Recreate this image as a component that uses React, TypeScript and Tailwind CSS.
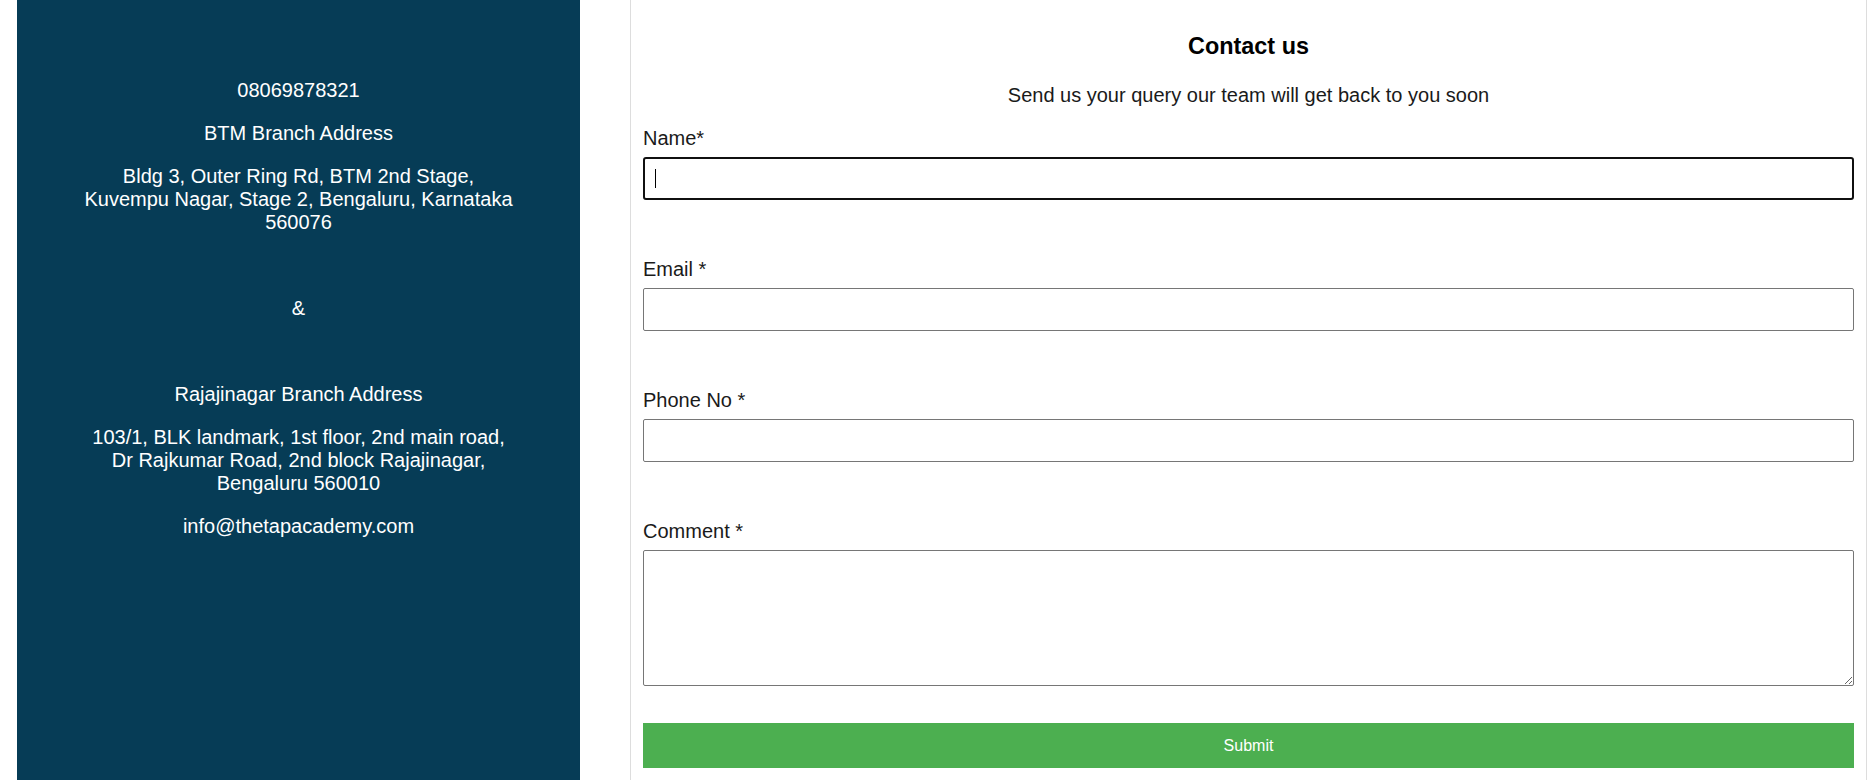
import { useState } from "react";

type Field = { label: string; name: string; type?: string };

const fields: Field[] = [
  { label: "Email *", name: "email", type: "email" },
  { label: "Phone No *", name: "phone", type: "tel" },
];

const ContactInfo = () => (
  <div className="ml-[17px] w-[563px] shrink-0 bg-[#063c56] px-[64px] pt-[79px] text-center text-[20px] leading-[23px] text-white">
    <p>08069878321</p>
    <p className="mt-[20px]">BTM Branch Address</p>
    <p className="mt-[20px]">
      Bldg 3, Outer Ring Rd, BTM 2nd Stage, Kuvempu Nagar, Stage 2, Bengaluru, Karnataka 560076
    </p>
    <p className="mt-[63px]">&amp;</p>
    <p className="mt-[63px]">Rajajinagar Branch Address</p>
    <p className="mt-[20px]">
      103/1, BLK landmark, 1st floor, 2nd main road, Dr Rajkumar Road, 2nd block Rajajinagar, Bengaluru 560010
    </p>
    <p className="mt-[20px]">info@thetapacademy.com</p>
  </div>
);

const App = () => {
  const [form, setForm] = useState({ name: "", email: "", phone: "", comment: "" });

  return (
    <div className="flex h-[780px] bg-white font-['Liberation_Sans',Arial,sans-serif]">
      {/* ===== left info panel ===== */}
      <ContactInfo />

      {/* ===== contact form ===== */}
      <div className="ml-[50px] w-[1237px] border-x border-[#dddddd] px-[12px] pt-[33px] text-[#1a1a1a]">
        <h3 className="text-center text-[23.4px] font-bold leading-[27px] text-black">Contact us</h3>
        <p className="mt-[24px] text-center text-[20px] leading-[23px]">
          Send us your query our team will get back to you soon
        </p>

        <form className="mt-[20px] flex flex-col" onSubmit={(e) => e.preventDefault()}>
          <label className="text-[20px] leading-[23px]">Name*</label>
          <div className="relative mt-[7px]">
            <input
              value={form.name}
              onChange={(e) => setForm({ ...form, name: e.target.value })}
              className="block h-[43px] w-full rounded-[3px] border-2 border-[#101010] px-[10px] text-[16px] outline-none"
            />
            <span className="absolute left-[12px] top-[12px] h-[19px] w-px bg-black" />
          </div>

          {fields.map((f) => (
            <div key={f.name} className="mt-[58px] flex flex-col">
              <label className="text-[20px] leading-[23px]">{f.label}</label>
              <input
                type={f.type}
                value={form[f.name as "email" | "phone"]}
                onChange={(e) => setForm({ ...form, [f.name]: e.target.value })}
                className="mt-[7px] block h-[43px] w-full rounded-[2px] border border-[#767676] px-[10px] text-[16px] outline-none"
              />
            </div>
          ))}

          <label className="mt-[58px] text-[20px] leading-[23px]">Comment *</label>
          <textarea
            value={form.comment}
            onChange={(e) => setForm({ ...form, comment: e.target.value })}
            className="mt-[7px] block h-[136px] w-full rounded-[2px] border border-[#767676] px-[10px] text-[16px] outline-none"
          />

          <button
            type="submit"
            className="mt-[37px] h-[45px] w-full bg-[#4caf50] text-[16px] text-white"
          >
            Submit
          </button>
        </form>
      </div>
    </div>
  );
};

export default App;
